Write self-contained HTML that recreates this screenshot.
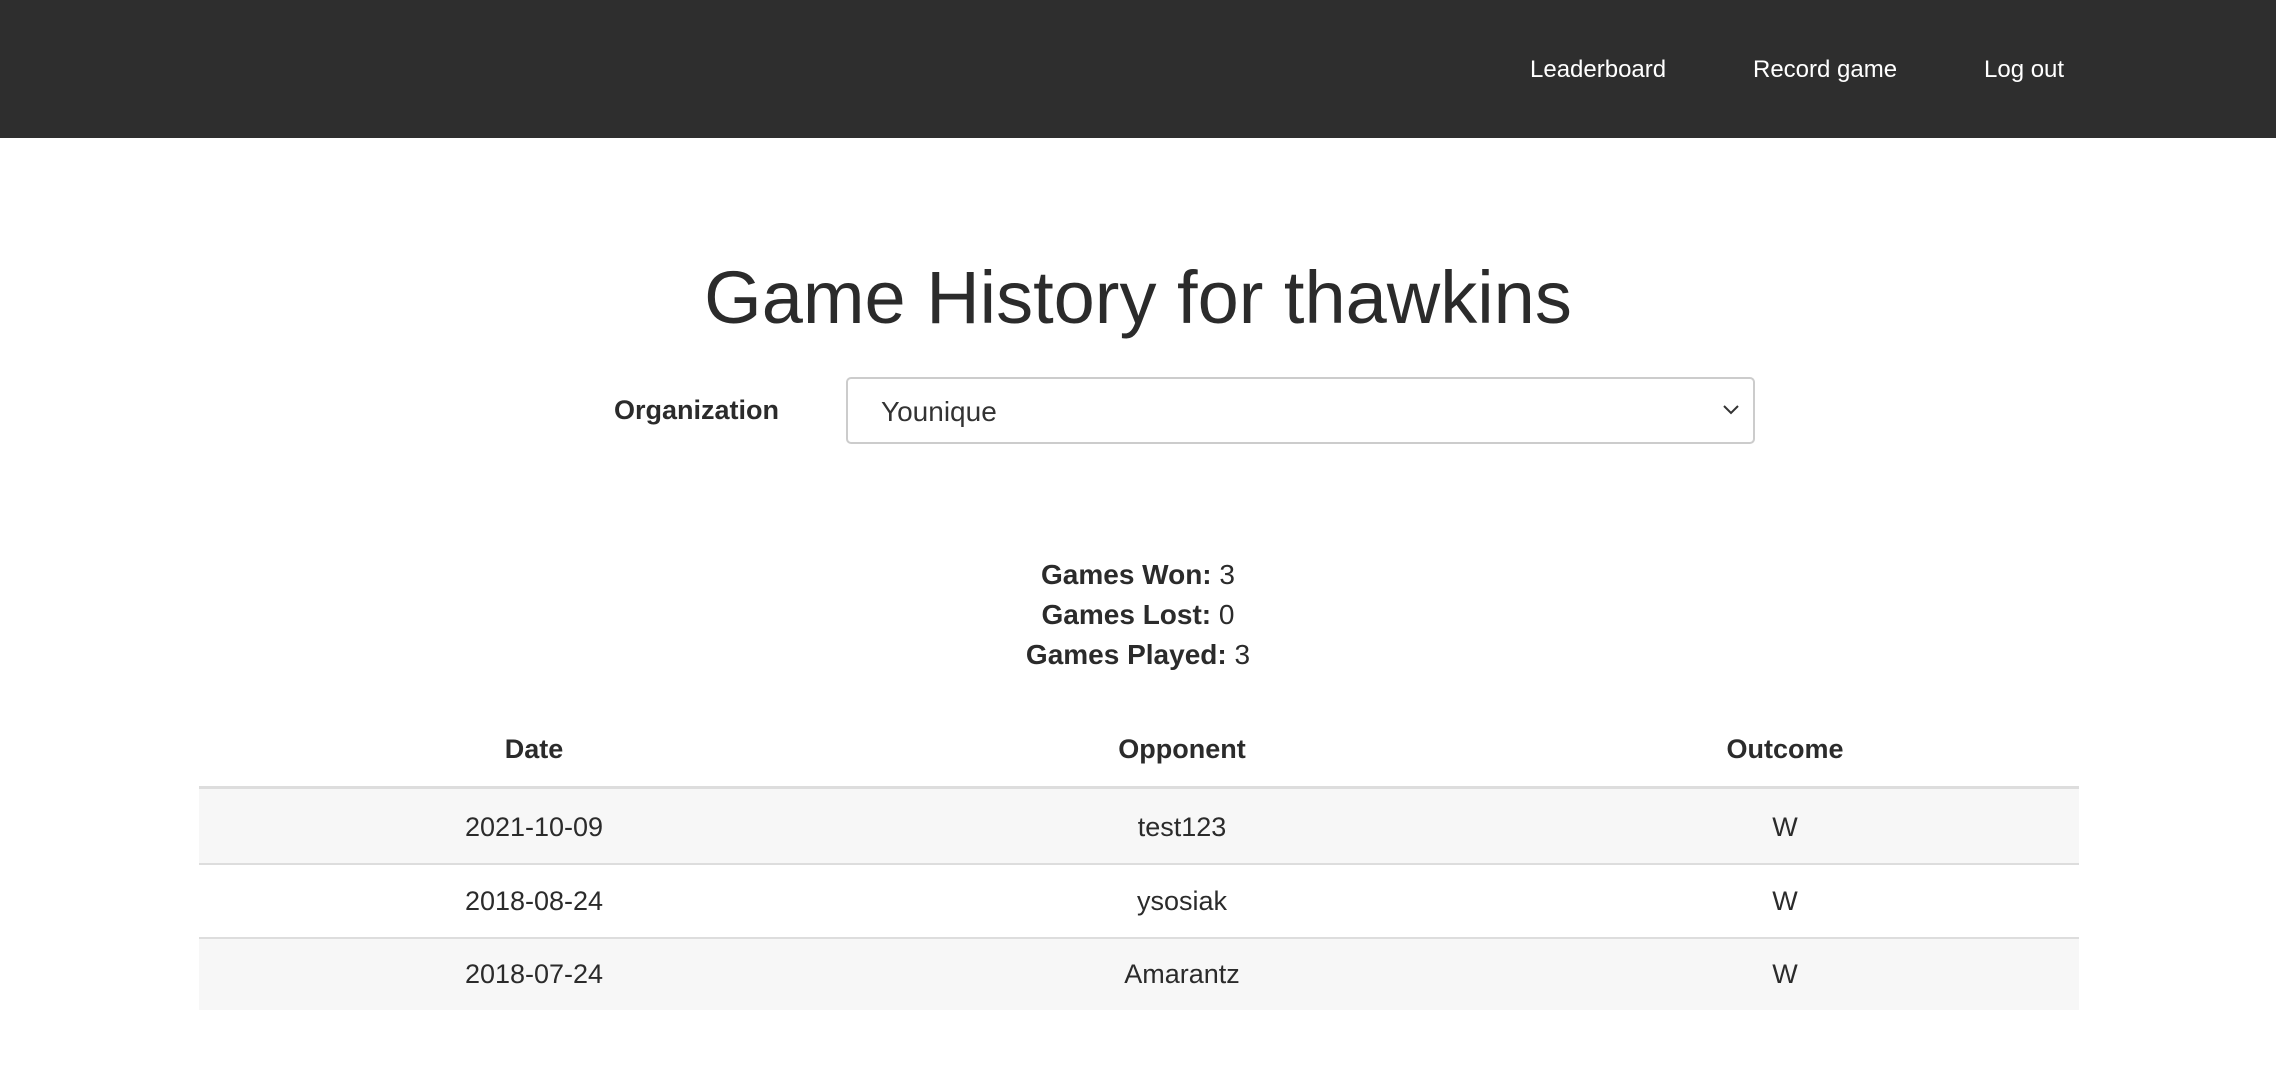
<!DOCTYPE html>
<html><head><meta charset="utf-8"><style>
*{margin:0;padding:0;box-sizing:border-box}
body{width:2276px;height:1076px;background:#fff;font-family:"Liberation Sans",sans-serif;color:#2b2b2b;position:relative;overflow:hidden}
.nav{position:absolute;left:0;top:0;width:2276px;height:138px;background:#2e2e2e}
.nav a{position:absolute;top:56px;color:#fff;font-size:24px;text-decoration:none;white-space:nowrap}
h1{position:absolute;left:0;width:2276px;text-align:center;top:253px;font-size:74px;font-weight:normal;color:#2b2b2b;line-height:90px}
.lbl{position:absolute;left:614px;top:395px;font-size:27px;font-weight:bold}
.sel{position:absolute;left:846px;top:377px;width:909px;height:67px;border:2px solid #ccc;border-radius:5px}
.sel span{position:absolute;left:33px;top:17px;font-size:28px;color:#333}
.sel svg{position:absolute;right:14px;top:26px}
.stats{position:absolute;left:0;width:2276px;text-align:center;top:555px;font-size:28px;line-height:40px}
.row{position:absolute;left:199px;width:1880px}
.row div{position:absolute;top:0;text-align:center;font-size:27px;transform:translateX(-50%);white-space:nowrap}
</style></head><body>
<div class="nav"><a style="left:1530px">Leaderboard</a><a style="left:1753px">Record game</a><a style="left:1984px">Log out</a></div>
<h1>Game History for thawkins</h1>
<div class="lbl">Organization</div>
<div class="sel"><span>Younique</span><svg width="16" height="10" viewBox="0 0 16 10"><path d="M1 1l7 7 7-7" fill="none" stroke="#333" stroke-width="2"/></svg></div>
<div class="stats"><b>Games Won:</b> 3<br><b>Games Lost:</b> 0<br><b>Games Played:</b> 3</div>
<div class="row" style="top:734px;height:54px"><div style="left:335px;font-weight:bold">Date</div><div style="left:983px;font-weight:bold">Opponent</div><div style="left:1586px;font-weight:bold">Outcome</div></div>
<div class="row" style="top:786px;height:3px;background:#ddd"></div>
<div class="row" style="top:789px;height:75px;background:#f7f7f7"><div style="left:335px;top:23px">2021-10-09</div><div style="left:983px;top:23px">test123</div><div style="left:1586px;top:23px">W</div></div>
<div class="row" style="top:863px;height:2px;background:#ddd"></div>
<div class="row" style="top:865px;height:72px"><div style="left:335px;top:21px">2018-08-24</div><div style="left:983px;top:21px">ysosiak</div><div style="left:1586px;top:21px">W</div></div>
<div class="row" style="top:937px;height:2px;background:#ddd"></div>
<div class="row" style="top:939px;height:71px;background:#f7f7f7"><div style="left:335px;top:20px">2018-07-24</div><div style="left:983px;top:20px">Amarantz</div><div style="left:1586px;top:20px">W</div></div>
</body></html>
